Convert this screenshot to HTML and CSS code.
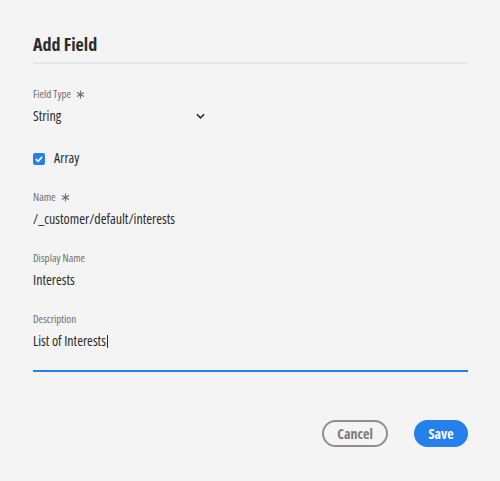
FILE: index.html
```html
<!DOCTYPE html>
<html>
<head>
<meta charset="utf-8">
<link rel="stylesheet" href="styles.css">
</head>
<body>
<div class="dialog">
  <h1 class="title">Add Field</h1>
  <div class="divider"></div>
  <div class="field">
    <div class="label">Field Type <svg class="req" viewBox="0 0 10 10"><path d="M5 0.5V9.5M1.1 2.75L8.9 7.25M1.1 7.25L8.9 2.75"/></svg></div>
    <div class="picker">
      <span class="value">String</span>
      <svg class="chevron" viewBox="0 0 10 6"><path d="M1 1L5 5L9 1"/></svg>
    </div>
  </div>
  <div class="check-row">
    <span class="checkbox"><svg viewBox="0 0 12 12"><path d="M2.8 6.2L5 8.3L9.2 3.8"/></svg></span>
    <span class="check-label">Array</span>
  </div>
  <div class="field">
    <div class="label">Name <svg class="req" viewBox="0 0 10 10"><path d="M5 0.5V9.5M1.1 2.75L8.9 7.25M1.1 7.25L8.9 2.75"/></svg></div>
    <div class="value">/_customer/default/interests</div>
  </div>
  <div class="field">
    <div class="label">Display Name</div>
    <div class="value">Interests</div>
  </div>
  <div class="field">
    <div class="label">Description</div>
    <div class="value textarea">List of Interests<span class="caret"></span></div>
  </div>
  <div class="footer">
    <button class="btn btn-secondary">Cancel</button>
    <button class="btn btn-primary">Save</button>
  </div>
</div>
</body>
</html>
```
FILE: styles.css
```css
html, body {
  margin: 0;
  padding: 0;
  background: #f4f4f4;
}
body {
  font-family: "Open Sans", "Lato", sans-serif;
  font-stretch: 75%;
  color: #2c2c2c;
}
.dialog {
  width: 435px;
  padding: 33px 0 0 33px;
}
.title {
  margin: 0;
  font-size: 18px;
  line-height: 22px;
  font-weight: 700;
  color: #2c2c2c;
}
.divider {
  height: 2px;
  background: #e7e7e7;
  margin-top: 7px;
}
.field {
  margin-top: 23px;
}
.label {
  font-size: 11px;
  line-height: 14px;
  color: #6e6e6e;
  display: flex;
  align-items: center;
  gap: 5px;
}
.req {
  width: 9px;
  height: 9px;
  fill: none;
  stroke: #6e6e6e;
  stroke-width: 1.3;
}
.value {
  font-size: 14px;
  line-height: 18px;
  margin-top: 6px;
  color: #2c2c2c;
}
.picker {
  width: 172px;
  display: flex;
  justify-content: space-between;
  align-items: center;
}
.picker .chevron {
  width: 9px;
  height: 6px;
  margin-top: 6px;
  fill: none;
  stroke: #2c2c2c;
  stroke-width: 1.8;
}
.check-row {
  display: flex;
  align-items: flex-start;
  margin-top: 24px;
  height: 18px;
}
.checkbox {
  width: 12px;
  height: 12px;
  margin-top: 4px;
  background: #2680eb;
  border-radius: 2px;
  display: flex;
}
.checkbox svg {
  width: 12px;
  height: 12px;
  fill: none;
  stroke: #fff;
  stroke-width: 1.7;
}
.check-label {
  margin-left: 9px;
  font-size: 14px;
  line-height: 18px;
}
.textarea {
  padding-bottom: 20px;
  border-bottom: 2px solid #2680eb;
}
.caret {
  display: inline-block;
  width: 1px;
  height: 13px;
  margin-left: 1px;
  background: #2c2c2c;
  vertical-align: -2px;
}
.footer {
  display: flex;
  justify-content: flex-end;
  gap: 26px;
  margin-top: 48px;
}
.btn {
  font-family: inherit;
  font-stretch: 75%;
  font-size: 14px;
  font-weight: 700;
  height: 27px;
  border-radius: 14px;
  padding: 0;
  box-sizing: border-box;
}
.btn-secondary {
  width: 66px;
  background: transparent;
  border: 2px solid #8e8e8e;
  color: #7a7a7a;
}
.btn-primary {
  width: 54px;
  background: #2680eb;
  border: 2px solid #2680eb;
  color: #fff;
}
```
